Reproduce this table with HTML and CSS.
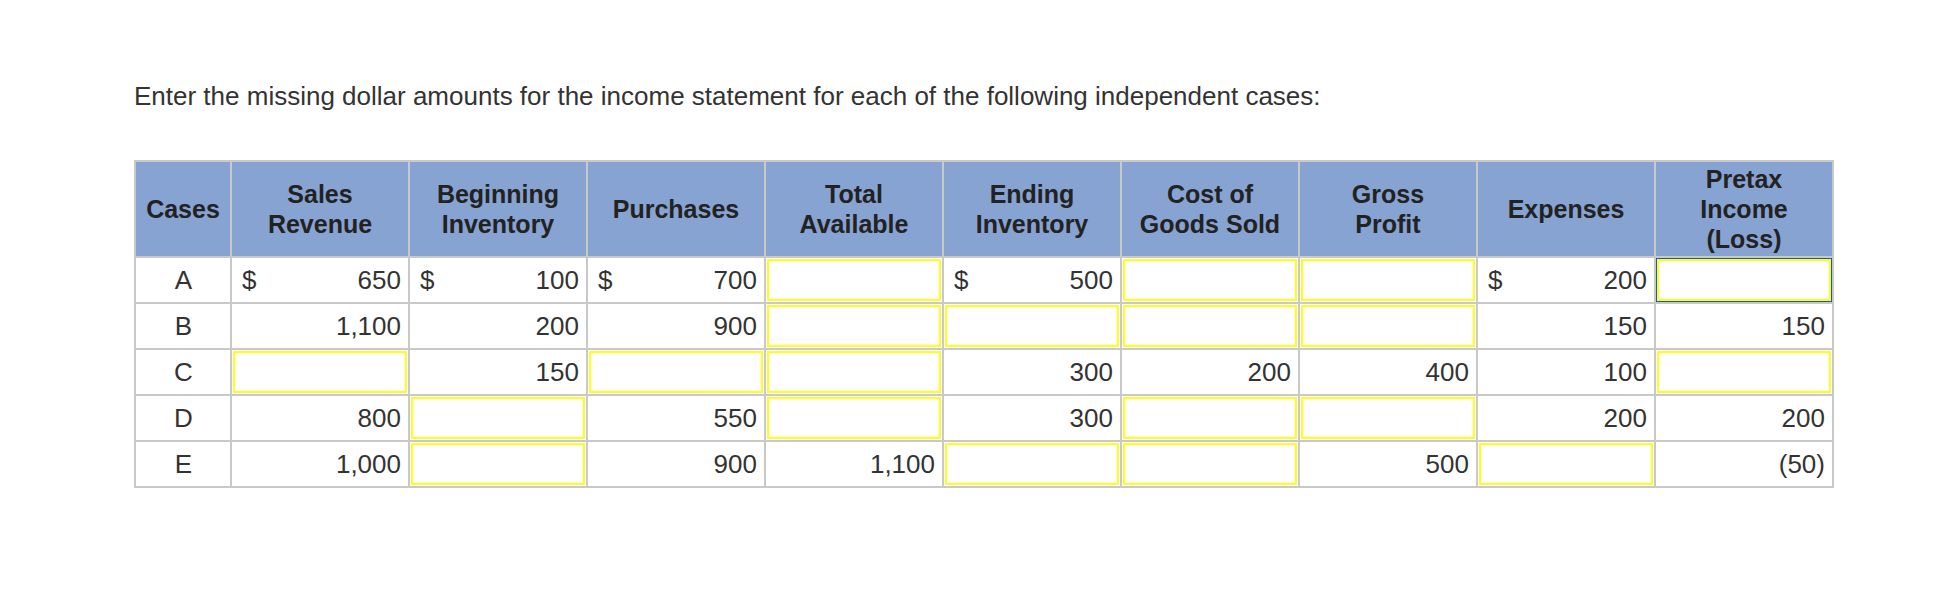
FILE: index.html
```html
<!DOCTYPE html>
<html lang="en">
<head>
<meta charset="utf-8">
<title>Income statement cases</title>
<link rel="stylesheet" href="styles.css">
</head>
<body>
<div class="page">
  <p class="prompt">Enter the missing dollar amounts for the income statement for each of the following independent cases:</p>
  <table class="grid">
    <colgroup>
      <col class="c-case">
      <col class="c-val"><col class="c-val"><col class="c-val"><col class="c-val"><col class="c-val">
      <col class="c-val"><col class="c-val"><col class="c-val"><col class="c-val">
    </colgroup>
    <thead>
      <tr>
        <th>Cases</th>
        <th>Sales<br>Revenue</th>
        <th>Beginning<br>Inventory</th>
        <th>Purchases</th>
        <th>Total<br>Available</th>
        <th>Ending<br>Inventory</th>
        <th>Cost of<br>Goods Sold</th>
        <th>Gross<br>Profit</th>
        <th>Expenses</th>
        <th>Pretax<br>Income<br>(Loss)</th>
      </tr>
    </thead>
    <tbody>
      <tr>
        <td class="case">A</td>
        <td><div class="money"><span>$</span><span>650</span></div></td>
        <td><div class="money"><span>$</span><span>100</span></div></td>
        <td><div class="money"><span>$</span><span>700</span></div></td>
        <td class="in"><div class="box"></div></td>
        <td><div class="money"><span>$</span><span>500</span></div></td>
        <td class="in"><div class="box"></div></td>
        <td class="in"><div class="box"></div></td>
        <td><div class="money"><span>$</span><span>200</span></div></td>
        <td class="in"><div class="box focus"></div></td>
      </tr>
      <tr>
        <td class="case">B</td>
        <td class="num">1,100</td>
        <td class="num">200</td>
        <td class="num">900</td>
        <td class="in"><div class="box"></div></td>
        <td class="in"><div class="box"></div></td>
        <td class="in"><div class="box"></div></td>
        <td class="in"><div class="box"></div></td>
        <td class="num">150</td>
        <td class="num">150</td>
      </tr>
      <tr>
        <td class="case">C</td>
        <td class="in"><div class="box"></div></td>
        <td class="num">150</td>
        <td class="in"><div class="box"></div></td>
        <td class="in"><div class="box"></div></td>
        <td class="num">300</td>
        <td class="num">200</td>
        <td class="num">400</td>
        <td class="num">100</td>
        <td class="in"><div class="box"></div></td>
      </tr>
      <tr>
        <td class="case">D</td>
        <td class="num">800</td>
        <td class="in"><div class="box"></div></td>
        <td class="num">550</td>
        <td class="in"><div class="box"></div></td>
        <td class="num">300</td>
        <td class="in"><div class="box"></div></td>
        <td class="in"><div class="box"></div></td>
        <td class="num">200</td>
        <td class="num">200</td>
      </tr>
      <tr>
        <td class="case">E</td>
        <td class="num">1,000</td>
        <td class="in"><div class="box"></div></td>
        <td class="num">900</td>
        <td class="num">1,100</td>
        <td class="in"><div class="box"></div></td>
        <td class="in"><div class="box"></div></td>
        <td class="num">500</td>
        <td class="in"><div class="box"></div></td>
        <td class="num">(50)</td>
      </tr>
    </tbody>
  </table>
</div>
</body>
</html>
```

FILE: styles.css
```css
html, body {
  margin: 0;
  padding: 0;
  background: #ffffff;
}

.page {
  padding: 80px 0 0 134px;
  font-family: "Liberation Sans", Arial, sans-serif;
  color: #333333;
}

.prompt {
  margin: 0;
  font-size: 26px;
  line-height: 32px;
  color: #333333;
}

.grid {
  margin-top: 48px;
  border-collapse: collapse;
  table-layout: fixed;
  width: 1700px;
  border: 2px solid #c9c9c9;
}

.c-case { width: 96px; }
.c-val { width: 178px; }

.grid th {
  background: #87a3d1;
  color: #222222;
  font-weight: bold;
  font-size: 25px;
  line-height: 30px;
  text-align: center;
  vertical-align: middle;
  height: 94px;
  padding: 0 4px;
  border: 2px solid #c9c9c9;
}

.grid td {
  height: 42px;
  padding: 0 7px 0 8px;
  border: 2px solid #c9c9c9;
  font-size: 26px;
  color: #333333;
  vertical-align: middle;
}

.grid td.case {
  text-align: center;
}

.grid td.num {
  text-align: right;
}

.money {
  display: flex;
  justify-content: space-between;
  padding-left: 2px;
}

.grid td.in {
  padding: 1px;
}

.box {
  height: 38px;
  border: 2px solid #fbfb3c;
  box-shadow: inset 0 0 0 1px #ffffb4;
  background: #ffffff;
}

.box.focus {
  box-shadow: inset 0 0 0 1px #ffffb4, 0 0 0 2px #1a5da6;
}
```
